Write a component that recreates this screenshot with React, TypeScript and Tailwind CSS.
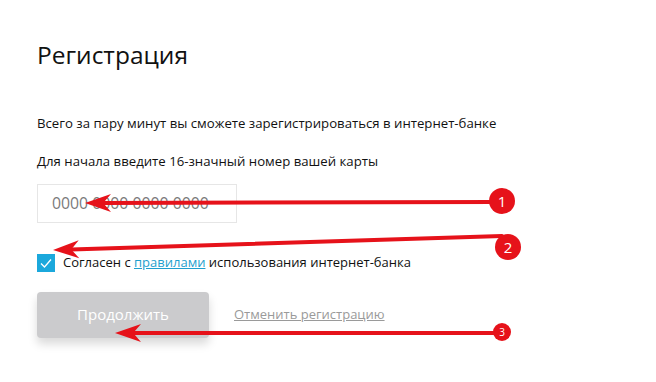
import React from "react";

function Arrow({ x1, y1, x2, y2, head = 26, hw = 9 }: { x1: number; y1: number; x2: number; y2: number; head?: number; hw?: number }) {
  // x2,y2 is the tip
  const dx = x1 - x2;
  const dy = y1 - y2;
  const len = Math.sqrt(dx * dx + dy * dy);
  const ux = dx / len;
  const uy = dy / len;
  const px = -uy;
  const py = ux;
  const bx = x2 + ux * head;
  const by = y2 + uy * head;
  const nx = x2 + ux * (head * 0.7);
  const ny = y2 + uy * (head * 0.7);
  const d = `M${x2},${y2} L${bx + px * hw},${by + py * hw} L${nx},${ny} L${bx - px * hw},${by - py * hw} Z`;
  return (
    <g>
      <line x1={x1} y1={y1} x2={nx} y2={ny} stroke="#e6121a" strokeWidth={4} strokeLinecap="round" />
      <path d={d} fill="#e6121a" />
    </g>
  );
}

export default function App() {
  return (
    <div className="relative w-[656px] h-[382px] bg-white overflow-hidden" style={{ fontFamily: '"Open Sans", "Noto Sans", sans-serif' }}>
      <div className="pl-[37px] pt-[38px]">
        <h1 className="text-[24.5px] leading-[34px] text-[#111] font-normal">Регистрация</h1>
        <p className="mt-[42px] text-[13.2px] leading-[18px] text-[#111]">Всего за пару минут вы сможете зарегистрироваться в интернет-банке</p>
        <p className="mt-[20px] text-[13.2px] leading-[18px] text-[#111]">Для начала введите 16-значный номер вашей карты</p>
        <div className="mt-[14px] w-[200px] h-[39px] border border-[#e6e6e6] flex items-center pl-[14px] text-[15.8px] text-[#7a7a7a]">
          0000 0000 0000 0000
        </div>
        <div className="mt-[30px] flex items-center gap-[8px]">
          <div className="w-[18px] h-[18px] bg-[#1ba8dc] flex items-center justify-center">
            <svg width="14" height="14" viewBox="0 0 14 14">
              <path d="M2 7.5 L5.5 11 L12 3.5" fill="none" stroke="white" strokeWidth="1.3" />
            </svg>
          </div>
          <span className="text-[13px] text-[#111]">
            Согласен с <span className="text-[#1f9fce] underline">правилами</span> использования интернет-банка
          </span>
        </div>
        <div className="mt-[19px] flex items-center">
          <div className="w-[172px] h-[46px] rounded-[4px] bg-[#cbcbcd] text-white text-[15px] flex items-center justify-center shadow-[0_6px_10px_rgba(0,0,0,0.15)]">
            Продолжить
          </div>
          <span className="ml-[25px] text-[13px] text-[#9a9a9a] underline">Отменить регистрацию</span>
        </div>
      </div>
      <svg className="absolute inset-0" width="656" height="382" viewBox="0 0 656 382">
        <Arrow x1={495} y1={202} x2={85} y2={203} />
        <Arrow x1={502} y1={236} x2={53} y2={250} />
        <Arrow x1={495} y1={333} x2={115} y2={333} />
        <circle cx={502} cy={201} r={13} fill="#e6121a" />
        <text x={502} y={206.5} textAnchor="middle" fill="white" fontSize="15" fontFamily='"Open Sans", sans-serif'>1</text>
        <circle cx={508} cy={247} r={13} fill="#e6121a" />
        <text x={508} y={252.5} textAnchor="middle" fill="white" fontSize="15" fontFamily='"Open Sans", sans-serif'>2</text>
        <circle cx={502} cy={332} r={9} fill="#e6121a" />
        <text x={502} y={336} textAnchor="middle" fill="white" fontSize="10" fontFamily='"Open Sans", sans-serif'>3</text>
      </svg>
    </div>
  );
}
